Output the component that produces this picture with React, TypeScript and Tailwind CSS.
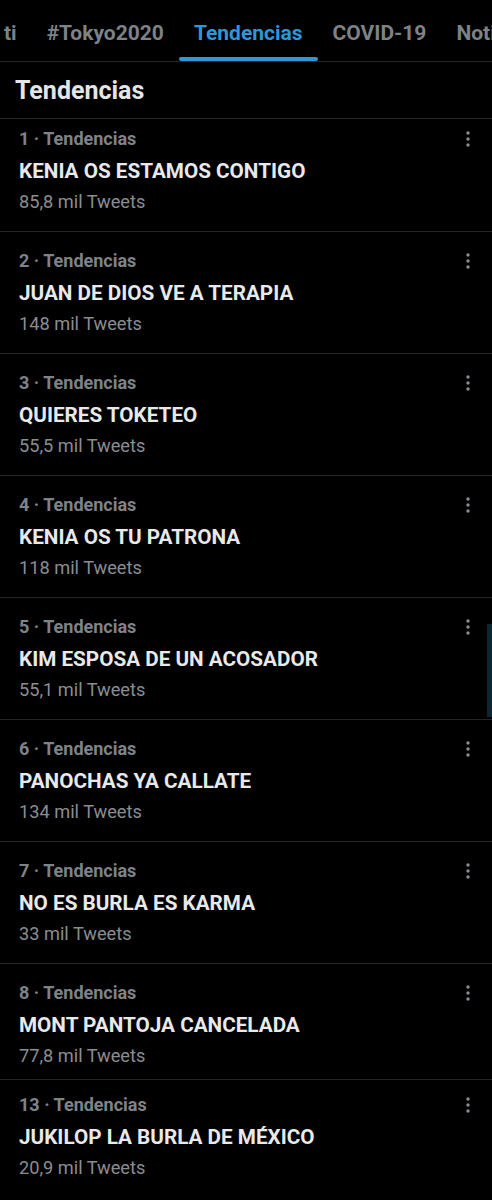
import { useState } from "react";

type Trend = {
    rank: number;
    title: string;
    count: string;
    h: string;
    pt: string;
};

const trends: Trend[] = [
    { rank: 1, title: "KENIA OS ESTAMOS CONTIGO", count: "85,8 mil Tweets", h: "h-[113px]", pt: "pt-[7px]" },
    { rank: 2, title: "JUAN DE DIOS VE A TERAPIA", count: "148 mil Tweets", h: "h-[122px]", pt: "pt-[16px]" },
    { rank: 3, title: "QUIERES TOKETEO", count: "55,5 mil Tweets", h: "h-[122px]", pt: "pt-[16px]" },
    { rank: 4, title: "KENIA OS TU PATRONA", count: "118 mil Tweets", h: "h-[122px]", pt: "pt-[16px]" },
    { rank: 5, title: "KIM ESPOSA DE UN ACOSADOR", count: "55,1 mil Tweets", h: "h-[122px]", pt: "pt-[16px]" },
    { rank: 6, title: "PANOCHAS YA CALLATE", count: "134 mil Tweets", h: "h-[122px]", pt: "pt-[16px]" },
    { rank: 7, title: "NO ES BURLA ES KARMA", count: "33 mil Tweets", h: "h-[122px]", pt: "pt-[16px]" },
    { rank: 8, title: "MONT PANTOJA CANCELADA", count: "77,8 mil Tweets", h: "h-[116px]", pt: "pt-[16px]" },
    { rank: 13, title: "JUKILOP LA BURLA DE MÉXICO", count: "20,9 mil Tweets", h: "h-[140px]", pt: "pt-[12px]" },
];

const tabs = ["#Tokyo2020", "Tendencias", "COVID-19", "Noticias"];

function Dots () {
    return (
        <svg width="6" height="18" viewBox="0 0 6 18" className="mt-[4px] mr-[21px] text-[#8a8d91]" fill="currentColor">
            <circle cx="3" cy="3" r="1.7"></circle>
            <circle cx="3" cy="9" r="1.7"></circle>
            <circle cx="3" cy="15" r="1.7"></circle>
        </svg>
    );
}

export default function App () {
    const [active, setActive] = useState("Tendencias");

    return (
        <div className="relative w-[492px] h-[1200px] overflow-hidden bg-black" style={{ fontFamily: "Roboto, 'Liberation Sans', sans-serif" }}>
            <div className="flex h-[62px] border-b border-[#222528] whitespace-nowrap overflow-hidden">
                <div className="flex items-center pt-[7px] pl-[4px] pr-[15px] text-[21px] font-bold text-[#7d8287]">ti</div>
                {tabs.map(tab => (
                    <button
                        key={tab}
                        onClick={() => setActive(tab)}
                        className="relative flex items-center pt-[7px] px-[15px] text-[21px] font-bold shrink-0"
                    >
                        <span className={active === tab ? "text-[#2d97dc]" : "text-[#7d8287]"}>{tab}</span>
                        {active === tab && <span className="absolute left-0 right-0 bottom-0 h-[4px] rounded-full bg-[#2d97dc]"></span>}
                    </button>
                ))}
            </div>

            <div className="h-[57px] flex items-center pl-[15px] border-b border-[#222528]">
                <h2 className="text-[25px] font-bold text-[#e4e5e6] pt-[1px]">Tendencias</h2>
            </div>

            {trends.map(trend => (
                <div key={trend.rank} className={`${trend.h} ${trend.pt} flex justify-between border-b border-[#222528] pl-[19px]`}>
                    <div className="flex flex-col">
                        <div className="text-[18px] font-bold leading-[26px] text-[#7f8388]">{trend.rank} · Tendencias</div>
                        <div className="text-[20.7px] font-bold leading-[26px] mt-[6px] text-[#e8e9ea]">{trend.title}</div>
                        <div className="text-[18.2px] leading-[26px] mt-[5px] text-[#8a8d91]">{trend.count}</div>
                    </div>
                    <Dots />
                </div>
            ))}

            <div className="absolute right-0 top-[624px] w-[5px] h-[93px] bg-[#0c2730]"></div>
        </div>
    );
}
